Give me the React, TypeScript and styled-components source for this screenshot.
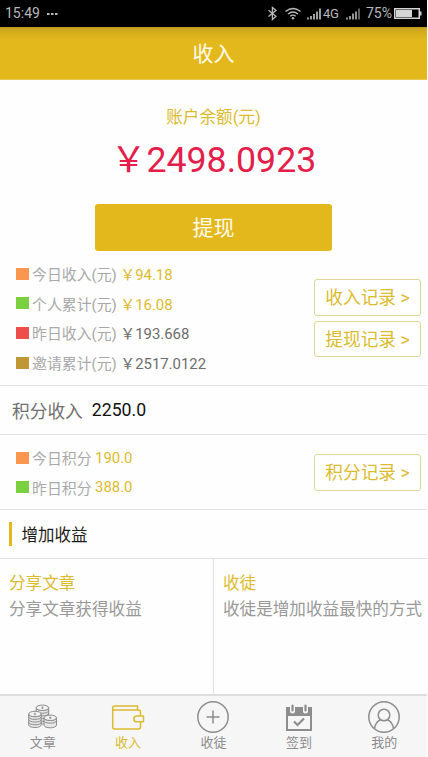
import React from 'react';
import styled, { createGlobalStyle } from 'styled-components';

const GOLD = '#e3b81c';
const GOLD_TEXT = '#dcbb2e';
const LINE = '#e2e1e3';
const STATUS = '#b9b9b9';

const GlobalStyle = createGlobalStyle`
  * { box-sizing: border-box; }
  body {
    margin: 0;
    background: #fefefe;
    font-family: Roboto, "Noto Sans CJK SC", sans-serif;
    overflow: hidden;
  }
`;

const Screen = styled.div`
  width: 427px;
  height: 757px;
  display: flex;
  flex-direction: column;
  background: #fefefe;
`;

const StatusBar = styled.div`
  height: 27px;
  flex: none;
  display: flex;
  align-items: center;
  padding: 0 5px;
  background: #000;
  color: ${STATUS};
  font-size: 14px;
  line-height: 27px;

  svg {
    display: block;
    flex: none;
  }
`;

const Clock = styled.span`
  width: 42px;
`;

const StatusIcons = styled.div`
  display: flex;
  align-items: center;
  margin-left: auto;
`;

const NetworkLabel = styled.span`
  width: 24px;
  padding-left: 1px;
  font-size: 13px;
  letter-spacing: -0.4px;
`;

const Percent = styled.span`
  width: 28px;
  margin-left: 6px;
  white-space: nowrap;
`;

const TitleBar = styled.header`
  height: 53px;
  flex: none;
  background: linear-gradient(#bd9a1d 0, #d0a91c 3px, #dab11d 8px, ${GOLD} 13px);
  border-bottom: 1px solid #e8c850;
  color: #fffbea;
  font-size: 21px;
  line-height: 55px;
  text-align: center;
`;

const Balance = styled.section`
  height: 179px;
  flex: none;
  display: flex;
  flex-direction: column;
  align-items: center;
`;

const BalanceLabel = styled.div`
  margin-top: 25px;
  height: 26px;
  line-height: 26px;
  font-size: 16.6px;
  color: ${GOLD_TEXT};
`;

const Amount = styled.div`
  margin-top: 7px;
  height: 44px;
  line-height: 44px;
  font-size: 35.7px;
  color: #e4204a;
`;

const Withdraw = styled.button`
  margin-top: 22px;
  width: 237px;
  height: 47px;
  flex: none;
  padding: 1px 0 0;
  border: 0;
  border-radius: 3px;
  background: ${GOLD};
  color: #fffbea;
  font-family: inherit;
  font-size: 21px;
  line-height: 46px;
`;

const StatSection = styled.section<{ $height: number; $top: number }>`
  height: ${p => p.$height}px;
  flex: none;
  display: flex;
  justify-content: space-between;
  padding: ${p => p.$top}px 6px 0 16px;
  border-bottom: 1px solid ${LINE};
`;

const StatRow = styled.div`
  height: 29.6px;
  display: flex;
  align-items: center;
  font-size: 14.9px;
  color: #a9a9a9;
`;

const Swatch = styled.i<{ $color: string }>`
  width: 13px;
  height: 12px;
  margin-right: 3px;
  background: ${p => p.$color};
`;

const StatValue = styled.span<{ $gold?: boolean }>`
  margin-left: 3.5px;
  color: ${p => (p.$gold ? GOLD_TEXT : '#6c6c6c')};
`;

const Actions = styled.div<{ $top: number }>`
  display: flex;
  flex-direction: column;
  gap: 5px;
  padding-top: ${p => p.$top}px;
`;

const RecordButton = styled.button`
  width: 107px;
  height: 36.5px;
  padding: 1px 0 0;
  border: 1px solid #dfd795;
  border-radius: 3px;
  background: #fff;
  color: ${GOLD_TEXT};
  font-family: inherit;
  font-size: 17.7px;
  line-height: 34px;
`;

const PointsHead = styled.div`
  height: 49px;
  flex: none;
  display: flex;
  align-items: center;
  padding-left: 12px;
  border-bottom: 1px solid ${LINE};
  font-size: 17.7px;
  color: #707070;
`;

const PointsTotal = styled.span`
  margin-left: 9px;
  color: #111;
`;

const SectionTitle = styled.h2`
  height: 49px;
  flex: none;
  margin: 0;
  display: flex;
  align-items: center;
  padding-left: 9px;
  border-bottom: 1px solid ${LINE};
  font-size: 16.5px;
  font-weight: 400;
  color: #1c1c1c;

  &::before {
    content: '';
    width: 3px;
    height: 24px;
    margin-right: 9.5px;
    background: ${GOLD};
  }
`;

const Cards = styled.section`
  flex: 1;
  display: grid;
  grid-template-columns: 214px 213px;
`;

const Card = styled.article`
  padding: 12px 0 0 9px;
  font-size: 16.6px;
  line-height: 25.5px;
  color: #999;
  white-space: nowrap;

  &:first-child {
    border-right: 1px solid ${LINE};
  }
`;

const CardTitle = styled.div`
  color: ${GOLD_TEXT};
`;

const TabBar = styled.nav`
  height: 63px;
  flex: none;
  display: grid;
  grid-template-columns: repeat(5, 1fr);
  border-top: 2px solid #dedede;
  background: #f6f6f6;
`;

const Tab = styled.div<{ $active?: boolean }>`
  display: flex;
  flex-direction: column;
  align-items: center;
  padding-top: 4px;
  color: ${p => (p.$active ? GOLD_TEXT : '#8d8d8d')};
  font-size: 13px;
  line-height: 18px;

  svg {
    display: block;
    flex: none;
  }
`;

const TabIcon = ({ children }: { children: React.ReactNode }) => (
  <svg width="34" height="34" viewBox="0 0 34 34" fill="none" stroke="currentColor" strokeWidth="1.5">
    {children}
  </svg>
);

const Coins = ({ x, y, n }: { x: number; y: number; n: number }) => (
  <g transform={`translate(${x} ${y})`} strokeWidth="1">
    <path d={`M0 3v${n * 2.7}c0 3.600 12.500 3.600 12.500 0V3`} fill="#e6e6e6" />
    {Array.from({ length: n }, (_, i) => (
      <path key={i} d={`M0 ${3 + i * 2.7}c0 3.600 12.500 3.600 12.500 0`} />
    ))}
    <ellipse cx="6.250" cy="3" rx="6.250" ry="2.700" fill="#f3f3f3" />
    <path d="M6.250 1.600v2.800M5 3h2.500" strokeWidth="0.800" />
  </g>
);

const incomeStats = [
  { color: '#fb9650', label: '今日收入(元)', value: '94.18', gold: true },
  { color: '#7bd040', label: '个人累计(元)', value: '16.08', gold: true },
  { color: '#ee4e49', label: '昨日收入(元)', value: '193.668' },
  { color: '#bf9734', label: '邀请累计(元)', value: '2517.0122' },
];

const pointStats = [
  { color: '#fb9650', label: '今日积分', value: '190.0' },
  { color: '#7bd040', label: '昨日积分', value: '388.0' },
];

const tabs = [
  {
    label: '文章',
    icon: (
      <TabIcon>
        <Coins x={10.2} y={4.8} n={5} />
        <Coins x={2.7} y={11} n={4} />
        <Coins x={18} y={14.8} n={2.7} />
      </TabIcon>
    ),
  },
  {
    label: '收入',
    active: true,
    icon: (
      <TabIcon>
        <path d="M26.500 10V6H3.500Q1.700 6 1.700 8V27Q1.700 29 3.500 29H27.500Q29.500 29 29.500 27V22M1.700 8Q1.700 10 3.500 10H27.500Q29.500 10 29.500 12V15.500" />
        <path d="M32.500 16v5.800h-6.500q-3.200 0-3.200-2.900t3.200-2.900z" strokeLinejoin="round" />
      </TabIcon>
    ),
  },
  {
    label: '收徒',
    icon: (
      <TabIcon>
        <circle cx="17" cy="17" r="15.200" />
        <path d="M17 10.500v13M10.500 17h13" />
      </TabIcon>
    ),
  },
  {
    label: '签到',
    icon: (
      <TabIcon>
        <path d="M5 8V30H29V8" strokeWidth="2" />
        <path d="M4 7h26v9H4z" fill="currentColor" stroke="none" />
        <path d="M10.500 4v7M23.500 4v7" stroke="#f6f6f6" strokeWidth="5" strokeLinecap="round" />
        <path d="M10.500 5.500v5M23.500 5.500v5" strokeWidth="2.200" strokeLinecap="round" />
        <path d="M12 21.500l3.500 3.500 6.500-6.500" strokeWidth="2.200" />
      </TabIcon>
    ),
  },
  {
    label: '我的',
    icon: (
      <TabIcon>
        <circle cx="17" cy="17" r="15.200" />
        <circle cx="17" cy="15" r="5.800" />
        <path d="M7.500 28.500Q8.500 22 13.500 19.800M26.500 28.500Q25.500 22 20.500 19.800" />
      </TabIcon>
    ),
  },
];

export default function App() {
  return (
    <>
      <GlobalStyle />
      <Screen>
        <StatusBar>
          <Clock>15:49</Clock>
          <svg width="12" height="4" fill={STATUS}>
            <path d="M0 1h2.500v2H0zM4 1h2.500v2H4zM8 1h2.500v2H8z" />
          </svg>
          <StatusIcons>
            <svg width="54" height="17" fill="none" stroke={STATUS} strokeWidth="1.300">
              <path d="M0.500 5.200l7.500 6-3.600 3.300V2.500L8 5.500l-7.500 6" />
              <path d="M17.500 6.500q7.500-6 15 0M20 9q5-4 10 0M22.300 11.300q2.700-2.200 5.400 0" />
              <circle cx="25" cy="13.300" r="1.200" fill={STATUS} stroke="none" />
              <path d="M40 14.500v-2M43 14.500v-3.500M46 14.500V9M49 14.500V6.500M52 14.500V3.500" strokeWidth="1.700" />
            </svg>
            <NetworkLabel>4G</NetworkLabel>
            <svg width="14" height="17" fill="none" stroke={STATUS} strokeWidth="1.600">
              <path d="M1 14.500v-2M4 14.500v-3.500M7 14.500V8.500M10 14.500V6.500" />
              <path d="M13 14.500V3.500" stroke="#777" />
            </svg>
            <Percent>75%</Percent>
            <svg width="28" height="13" fill="none" stroke="#d5d5d5">
              <rect x="0.750" y="1.750" width="24.500" height="9.500" strokeWidth="1.500" />
              <path d="M2 3h16v7H2zM25 4.500h2.500v4H25z" fill="#d5d5d5" stroke="none" />
            </svg>
          </StatusIcons>
        </StatusBar>
        <TitleBar>收入</TitleBar>
        <Balance>
          <BalanceLabel>账户余额(元)</BalanceLabel>
          <Amount>￥2498.0923</Amount>
          <Withdraw>提现</Withdraw>
        </Balance>
        <StatSection $height={127} $top={0}>
          <div>
            {incomeStats.map(s => (
              <StatRow key={s.label}>
                <Swatch $color={s.color} />
                {s.label}
                <StatValue $gold={s.gold}>￥{s.value}</StatValue>
              </StatRow>
            ))}
          </div>
          <Actions $top={20}>
            <RecordButton>收入记录 &gt;</RecordButton>
            <RecordButton>提现记录 &gt;</RecordButton>
          </Actions>
        </StatSection>
        <PointsHead>
          积分收入<PointsTotal>2250.0</PointsTotal>
        </PointsHead>
        <StatSection $height={75} $top={8}>
          <div>
            {pointStats.map(s => (
              <StatRow key={s.label}>
                <Swatch $color={s.color} />
                {s.label}
                <StatValue $gold>{s.value}</StatValue>
              </StatRow>
            ))}
          </div>
          <Actions $top={11}>
            <RecordButton>积分记录 &gt;</RecordButton>
          </Actions>
        </StatSection>
        <SectionTitle>增加收益</SectionTitle>
        <Cards>
          <Card>
            <CardTitle>分享文章</CardTitle>
            <div>分享文章获得收益</div>
          </Card>
          <Card>
            <CardTitle>收徒</CardTitle>
            <div>收徒是增加收益最快的方式</div>
          </Card>
        </Cards>
        <TabBar>
          {tabs.map(t => (
            <Tab key={t.label} $active={t.active}>
              {t.icon}
              {t.label}
            </Tab>
          ))}
        </TabBar>
      </Screen>
    </>
  );
}
